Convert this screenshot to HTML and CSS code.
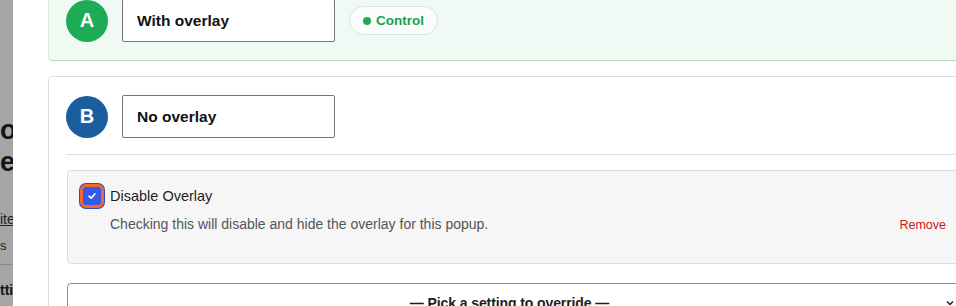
FILE: index.html
```html
<!DOCTYPE html>
<html>
<head>
<meta charset="utf-8">
<link rel="stylesheet" href="styles.css">
</head>
<body>
<div class="page">
  <div class="backdrop">
    <div class="bd-line bd-title">o</div>
    <div class="bd-line bd-title">ee</div>
    <div class="bd-line bd-link">ite</div>
    <div class="bd-line bd-small">s</div>
    <div class="bd-sep"></div>
    <div class="bd-line bd-item">tti</div>
  </div>
  <div class="modal">
    <div class="card card-a">
      <div class="row">
        <div class="badge badge-a">A</div>
        <div class="name-input">With overlay</div>
        <div class="pill"><span class="dot"></span>Control</div>
      </div>
    </div>
    <div class="card card-b">
      <div class="row">
        <div class="badge badge-b">B</div>
        <div class="name-input">No overlay</div>
      </div>
      <div class="divider"></div>
      <div class="setting">
        <div class="check-row">
          <span class="checkbox">
            <svg width="10" height="10" viewBox="0 0 10 10"><path d="M2 5.2 L4.2 7.2 L8 2.8" fill="none" stroke="#fff" stroke-width="1.6" stroke-linecap="round" stroke-linejoin="round"/></svg>
          </span>
          <span class="check-label">Disable Overlay</span>
        </div>
        <div class="desc-row">
          <span class="desc">Checking this will disable and hide the overlay for this popup.</span>
          <span class="remove">Remove</span>
        </div>
      </div>
      <div class="select">
        <span class="select-text">— Pick a setting to override —</span>
        <svg class="chev" width="10" height="10" viewBox="0 0 10 10"><path d="M2 3.5 L5 6.5 L8 3.5" fill="none" stroke="#1e1e1e" stroke-width="1.5"/></svg>
      </div>
    </div>
  </div>
</div>
</body>
</html>
```
FILE: styles.css
```css
* { box-sizing: border-box; }
html, body { margin: 0; padding: 0; }
body {
  width: 956px;
  height: 306px;
  overflow: hidden;
  background: #fff;
  font-family: "Liberation Sans", Arial, sans-serif;
  color: #1e1e1e;
}
.page {
  display: flex;
  width: 956px;
  height: 306px;
  overflow: hidden;
}
.backdrop {
  width: 13px;
  flex-shrink: 0;
  background: #a5a5a5;
  overflow: hidden;
  padding-top: 114px;
  display: flex;
  flex-direction: column;
}
.bd-line {
  white-space: nowrap;
  color: #141414;
}
.bd-title {
  font-size: 27px;
  font-weight: 700;
  line-height: 32px;
}
.bd-link {
  margin-top: 32px;
  font-size: 14px;
  line-height: 18px;
  text-decoration: underline;
  color: #222;
}
.bd-small {
  margin-top: 9px;
  font-size: 13px;
  line-height: 18px;
  color: #222;
}
.bd-sep {
  margin-top: 9px;
  height: 1px;
  background: #8a8a8a;
}
.bd-item {
  margin-top: 16px;
  font-size: 14px;
  font-weight: 700;
  line-height: 18px;
}
.modal {
  flex: 1;
  background: #fff;
  padding-left: 35px;
  display: flex;
  flex-direction: column;
  overflow: hidden;
}
.card {
  width: 930px;
  flex-shrink: 0;
  border-radius: 4px;
  padding: 18px 17px;
}
.card-a {
  margin-top: -20px;
  background: #f1f9f4;
  border: 1px solid #d2e9da;
  border-bottom-color: #b7dcc4;
}
.card-b {
  margin-top: 15px;
  background: #fff;
  border: 1px solid #dedede;
}
.row {
  display: flex;
  align-items: center;
}
.badge {
  width: 42px;
  height: 42px;
  border-radius: 50%;
  color: #fff;
  font-weight: 700;
  font-size: 20px;
  display: flex;
  align-items: center;
  justify-content: center;
  flex-shrink: 0;
}
.badge-a { background: #1eab55; }
.badge-b { background: #1b5e9f; }
.name-input {
  margin-left: 14px;
  width: 213px;
  height: 43px;
  border: 1px solid #767676;
  border-radius: 2px;
  background: #fff;
  padding-left: 14px;
  display: flex;
  align-items: center;
  font-size: 15.5px;
  font-weight: 700;
  color: #111;
}
.pill {
  margin-left: 14px;
  height: 29px;
  padding: 0 13px;
  border: 1px solid #d4e8da;
  border-radius: 15px;
  background: #fbfdfc;
  display: flex;
  align-items: center;
  gap: 5px;
  font-size: 13.5px;
  font-weight: 700;
  color: #1a9f4c;
}
.dot {
  width: 8px;
  height: 8px;
  border-radius: 50%;
  background: #1eab55;
}
.divider {
  margin-top: 16px;
  height: 1px;
  background: #e0e0e0;
}
.setting {
  margin: 15px 0 0 1px;
  height: 94px;
  background: #f6f6f6;
  border: 1px solid #dcdcdc;
  border-radius: 4px;
  padding: 12px 13px 0 15px;
}
.check-row {
  display: flex;
  align-items: center;
  height: 26px;
}
.checkbox {
  width: 18px;
  height: 18px;
  border-radius: 3px;
  background: #3858e9;
  box-shadow: 0 0 0 3px #f2692f, 0 0 0 4px #2c4cc4;
  display: flex;
  align-items: center;
  justify-content: center;
  flex-shrink: 0;
}
.check-label {
  margin-left: 9px;
  font-size: 14.5px;
  color: #1e1e1e;
}
.desc-row {
  margin-top: 6px;
  display: flex;
  justify-content: space-between;
  align-items: center;
}
.desc {
  margin-left: 27px;
  font-size: 14px;
  color: #555;
}
.remove {
  font-size: 12.5px;
  color: #cc1818;
  margin-top: 3px;
}
.select {
  margin: 19px 0 0 1px;
  height: 40px;
  border: 1px solid #8c8f94;
  border-radius: 4px;
  position: relative;
  display: flex;
  align-items: center;
  justify-content: center;
  font-size: 14px;
  font-weight: 700;
  color: #1e1e1e;
}
.select-text {
  margin-right: 8px;
  letter-spacing: -0.1px;
}
.chev {
  position: absolute;
  right: 4px;
  top: 14px;
}
```
